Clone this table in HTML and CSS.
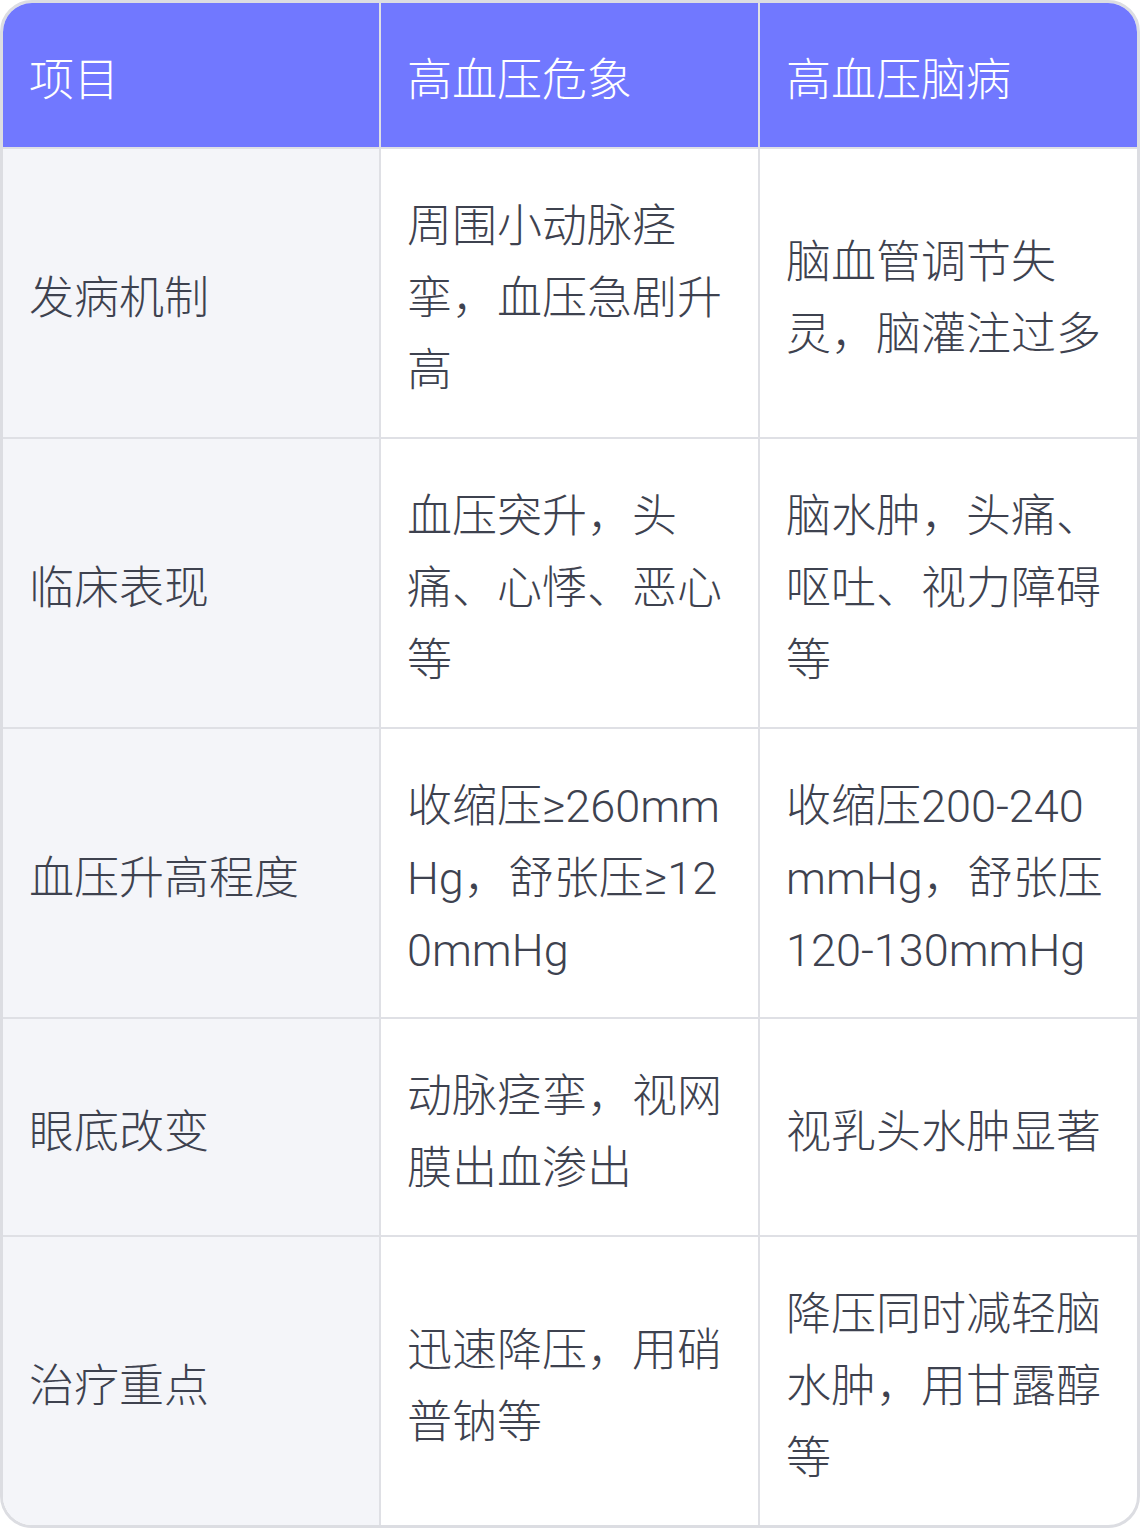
FILE: index.html
```html
<!DOCTYPE html>
<html lang="zh-CN">
<head>
<meta charset="utf-8">
<link rel="stylesheet" href="styles.css">
</head>
<body>
<div class="wrap">
<table class="tbl">
  <colgroup><col class="c1"><col class="c2"><col class="c3"></colgroup>
  <thead>
    <tr><th>项目</th><th>高血压危象</th><th>高血压脑病</th></tr>
  </thead>
  <tbody>
    <tr><td>发病机制</td><td>周围小动脉痉挛，血压急剧升高</td><td>脑血管调节失灵，脑灌注过多</td></tr>
    <tr><td>临床表现</td><td>血压突升，头痛、心悸、恶心等</td><td>脑水肿，头痛、呕吐、视力障碍等</td></tr>
    <tr><td>血压升高程度</td><td>收缩压≥260mmHg，舒张压≥120mmHg</td><td>收缩压200-240mmHg，舒张压120-130mmHg</td></tr>
    <tr><td>眼底改变</td><td>动脉痉挛，视网膜出血渗出</td><td>视乳头水肿显著</td></tr>
    <tr><td>治疗重点</td><td>迅速降压，用硝普钠等</td><td>降压同时减轻脑水肿，用甘露醇等</td></tr>
  </tbody>
</table>
</div>
</body>
</html>
```
FILE: styles.css
```css
html, body {
  margin: 0;
  padding: 0;
  background: #ffffff;
}
.wrap {
  width: 1140px;
  height: 1528px;
  box-sizing: border-box;
  border: 3px solid #dcdde2;
  border-radius: 32px;
  overflow: hidden;
  background: #ffffff;
}
.tbl {
  width: 1134px;
  border-collapse: collapse;
  table-layout: fixed;
  font-family: Roboto, "Noto Sans CJK SC", "Noto Sans", sans-serif;
  font-weight: 300;
  font-size: 45px;
  line-height: 72px;
  color: #3e424f;
}
.c1 { width: 377px; }
.c2 { width: 379px; }
.c3 { width: 378px; }
.tbl th, .tbl td {
  padding: 42px 27px 30px 26px;
  text-align: left;
  vertical-align: middle;
  word-break: break-all;
  border: 2px solid #dfe0e5;
}
.tbl tr > *:first-child { border-left: none; }
.tbl tr > *:last-child { border-right: none; }
.tbl thead th {
  background: #7178ff;
  color: #ffffff;
  font-weight: 300;
  border-top: none;
  height: 72px;
}
.tbl tbody tr:last-child td { border-bottom: none; }
.tbl td:first-child { background: #f4f5f9; }
```
